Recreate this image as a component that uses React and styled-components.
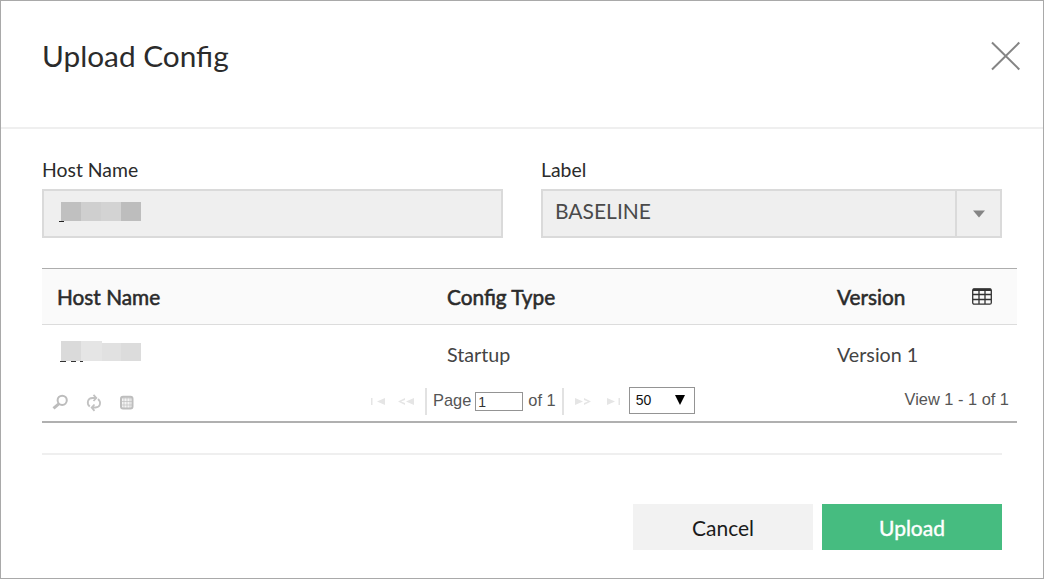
import React from "react";
import styled, { createGlobalStyle, css } from "styled-components";

const Global = createGlobalStyle`
  *, *::before, *::after { box-sizing: border-box; }
  body { margin: 0; background: #fff; font-family: Lato, "Liberation Sans", sans-serif; }
  button, input { font: inherit; margin: 0; }
`;

const Dialog = styled.section`
  width: 1044px;
  height: 579px;
  display: flex;
  flex-direction: column;
  border: 1px solid #a9a9a9;
  background: #fff;
  color: #2b2b2b;
`;

const Header = styled.header`
  height: 128px;
  flex: none;
  display: flex;
  justify-content: space-between;
  align-items: flex-start;
  padding: 36px 22px 0 41px;
  border-bottom: 2px solid #efefef;
`;

const Title = styled.h1`
  margin: 0;
  font-size: 29.8px;
  line-height: 37px;
  font-weight: 400;
`;

const CloseButton = styled.button`
  display: flex;
  padding: 0;
  margin-top: 4px;
  border: 0;
  background: none;
  color: #858585;
`;

const Body = styled.div`
  display: flex;
  flex-direction: column;
  padding: 0 41px;
`;

const Fields = styled.div`
  display: grid;
  grid-template-columns: 461px 461px;
  column-gap: 38px;
  padding-top: 28px;
`;

const Field = styled.div`
  display: flex;
  flex-direction: column;
`;

const FieldLabel = styled.label`
  font-size: 19.4px;
  line-height: 26px;
  height: 32px;
`;

const Control = styled.div`
  height: 49px;
  display: flex;
  justify-content: space-between;
  border: 2px solid #dadada;
  background: #efefef;
  color: #4a4a4a;
`;

const ControlValue = styled.span`
  padding-left: ${(p) => p.$inset}px;
  font-size: 21px;
  line-height: 39px;
`;

const ValueMask = styled.svg`
  display: block;
  margin-top: 10px;
`;

const DropButton = styled.span`
  width: 45px;
  display: flex;
  align-items: center;
  justify-content: center;
  border-left: 2px solid #dadada;
`;

const Grid = styled.div`
  width: 975px;
  height: 155px;
  margin-top: 30px;
  border-top: 1px solid #adadad;
  border-bottom: 2px solid #b0b0b0;
`;

const rowColumns = css`
  display: grid;
  grid-template-columns: 390px 390px 135px 1fr;
  padding-left: 15px;
`;

const GridHead = styled.div`
  ${rowColumns}
  height: 56px;
  line-height: 55px;
  font-size: 20.8px;
  background: #fafafa;
  border-bottom: 1px solid #dcdcdc;
  -webkit-text-stroke: 0.55px currentColor;
`;

const GridRow = styled.div`
  ${rowColumns}
  height: 52px;
  line-height: 59px;
  font-size: 19.7px;
  color: #444;
`;

const ColumnsIcon = styled.svg`
  margin-top: 19px;
`;

const RowMask = styled.svg`
  margin-top: 15px;
`;

const Pager = styled.div`
  height: 44px;
  display: grid;
  grid-template-columns: 326px 1fr auto;
  padding: 0 8px 0 0;
  font-family: "Liberation Sans", Arial, sans-serif;
  font-size: 16.4px;
  color: #555;
`;

const PagerTools = styled.div`
  display: flex;
  gap: 17px;
  padding: 17px 0 0 10px;
`;

const PagerNav = styled.div`
  height: 28px;
  margin-top: 10px;
  display: flex;
  align-items: center;
`;

const NavIcon = styled.svg`
  flex: none;
  margin-left: ${(p) => p.$gap || 0}px;
`;

const Divider = styled.span`
  width: 2px;
  height: 27px;
  background: #e2e2e2;
  margin: 0 ${(p) => p.$after}px 0 ${(p) => p.$before}px;
`;

const PageInput = styled.input`
  width: 48px;
  height: 19px;
  margin: 1px 5px 0 4px;
  padding: 0 2px;
  border: 1px solid #949494;
  border-radius: 0;
  background: #fff;
  color: #333;
  font-size: 14px;
`;

const NavText = styled.span`
  line-height: 26px;
  margin-top: -3px;
`;

const PageSize = styled.div`
  width: 66px;
  height: 27px;
  margin: -2px 0 0 8px;
  padding: 0 9px 0 6px;
  display: flex;
  align-items: center;
  justify-content: space-between;
  border: 1px solid #949494;
  color: #111;
  font-size: 14px;
`;

const PagerInfo = styled.div`
  padding-top: 9px;
  line-height: 27px;
`;

const Rule = styled.div`
  height: 2px;
  width: 960px;
  margin-top: 30px;
  background: #efefef;
`;

const Actions = styled.footer`
  width: 960px;
  display: flex;
  justify-content: flex-end;
  gap: 9px;
  margin-top: 49px;
`;

const Button = styled.button`
  width: 180px;
  height: 46px;
  padding: 1px 0 0;
  border: 0;
  font-size: 21px;
  background: ${(p) => (p.$primary ? "#46bc80" : "#f2f2f2")};
  color: ${(p) => (p.$primary ? "#fff" : "#1b1b1b")};
  -webkit-text-stroke: ${(p) => (p.$primary ? "0.4px #fff" : "0")};
`;

export default function App() {
  return (
    <>
      <Global />
      <Dialog>
        <Header>
          <Title>Upload Config</Title>
          <CloseButton aria-label="Close">
            <svg width="31" height="30" viewBox="0 0 31 30" stroke="currentColor" strokeWidth="2" fill="none">
              <path d="M2 1.5 29.300 28.5M29.300 1.5 2 28.5" />
            </svg>
          </CloseButton>
        </Header>
        <Body>
          <Fields>
            <Field>
              <FieldLabel>Host Name</FieldLabel>
              <Control>
                <ControlValue $inset={14}>
                  <ValueMask width="84" height="24" viewBox="0 0 84 24">
                    <path fill="#c0c0c0" d="M3 1h20v19H3z" />
                    <path fill="#cfcfcf" d="M23 1h20v19H23z" />
                    <path fill="#d3d3d3" d="M43 1h20v19H43z" />
                    <path fill="#bdbdbd" d="M63 1h20v19H63z" />
                    <path fill="#222" d="M1 20h5v1H1z" />
                  </ValueMask>
                </ControlValue>
              </Control>
            </Field>
            <Field>
              <FieldLabel>Label</FieldLabel>
              <Control>
                <ControlValue $inset={12}>BASELINE</ControlValue>
                <DropButton>
                  <svg width="12" height="8" viewBox="0 0 12 8">
                    <path fill="#858585" d="M0 .5h12L6 7.5z" />
                  </svg>
                </DropButton>
              </Control>
            </Field>
          </Fields>

          <Grid>
            <GridHead>
              <span>Host Name</span>
              <span>Config Type</span>
              <span>Version</span>
              <ColumnsIcon width="20" height="17" viewBox="0 0 20 17" fill="none" stroke="#333" strokeWidth="1.3">
                <rect x=".7" y=".8" width="18.6" height="15.4" rx="1.5" />
                <path d="M1 1.8h18" strokeWidth="2.4" />
                <path d="M1 6.5h18M1 11.5h18M7 1v15M13 1v15" />
              </ColumnsIcon>
            </GridHead>
            <GridRow>
              <RowMask width="86" height="24" viewBox="0 0 86 24">
                <path fill="#dadada" d="M4 1h20v20H4z" />
                <path fill="#e5e5e5" d="M24 1h21v20H24z" />
                <path fill="#e1e1e1" d="M45 3h19v18H45z" />
                <path fill="#dcdcdc" d="M64 3h20v18H64z" />
                <path fill="#333" d="M3 21h6v1H3zM14 21h5v1h-5zM23 21h3v1h-3z" />
              </RowMask>
              <span>Startup</span>
              <span>Version 1</span>
            </GridRow>
            <Pager>
              <PagerTools>
                <svg width="17" height="17" viewBox="0 0 17 17" fill="none" stroke="#bcbcbc">
                  <circle cx="10.2" cy="6.3" r="4.6" strokeWidth="2" />
                  <path d="M6.800 9.800 1.500 14.300" strokeWidth="3" />
                </svg>
                <svg width="16" height="18" viewBox="0 0 16 18" fill="none" stroke="#c2c2c2" strokeWidth="1.8">
                  <path d="M3.800 12.500C.300 9.500 1.500 4 6.500 4H9.500M7.500.800 10.300 4 7.500 7M12 5C15.500 8 14.500 13.500 9.500 13.500H6.500M8.500 10.500 5.700 13.500 8.500 16.800" />
                </svg>
                <svg width="16" height="17" viewBox="0 0 16 17" fill="none" stroke="#bebebe">
                  <rect x="2" y="2.800" width="11.500" height="11.600" rx="2" fill="#f4f4f4" strokeWidth="2" />
                  <path d="M2 4h11.500M2 7.500h11.500M2 11h11.500M5 3.500v11M8 3.500v11M11 3.500v11" strokeWidth=".7" />
                </svg>
              </PagerTools>
              <PagerNav>
                <NavIcon $gap={2} width="16" height="10" viewBox="0 0 16 10">
                  <path fill="#e5e5e5" d="M1 2h1.500v7H1zM15 2v7L7 5.500z" />
                </NavIcon>
                <NavIcon $gap={12} width="17" height="10" viewBox="0 0 17 10">
                  <path fill="#e5e5e5" d="M7 2v2L3 5.500l4 1.500v2L0 5.500zM16 2v7L8 5.500z" />
                </NavIcon>
                <Divider $before={10} $after={6} />
                <NavText>Page</NavText>
                <PageInput defaultValue="1" aria-label="Page" />
                <NavText>of 1</NavText>
                <Divider $before={6} $after={10} />
                <NavIcon width="17" height="10" viewBox="0 0 17 10">
                  <path fill="#e5e5e5" d="M1 2l8 3.500L1 9zM10 2l7 3.500L10 9V7l4-1.500-4-1.500z" />
                </NavIcon>
                <NavIcon $gap={15} width="15" height="10" viewBox="0 0 15 10">
                  <path fill="#e5e5e5" d="M1 2l8 3.500L1 9zM12.500 2h1.500v7h-1.500z" />
                </NavIcon>
                <PageSize>
                  <span>50</span>
                  <svg width="10" height="10" viewBox="0 0 10 10">
                    <path fill="#000" d="M0 0h10L5 10z" />
                  </svg>
                </PageSize>
              </PagerNav>
              <PagerInfo>View 1 - 1 of 1</PagerInfo>
            </Pager>
          </Grid>

          <Rule />
          <Actions>
            <Button>Cancel</Button>
            <Button $primary>Upload</Button>
          </Actions>
        </Body>
      </Dialog>
    </>
  );
}
